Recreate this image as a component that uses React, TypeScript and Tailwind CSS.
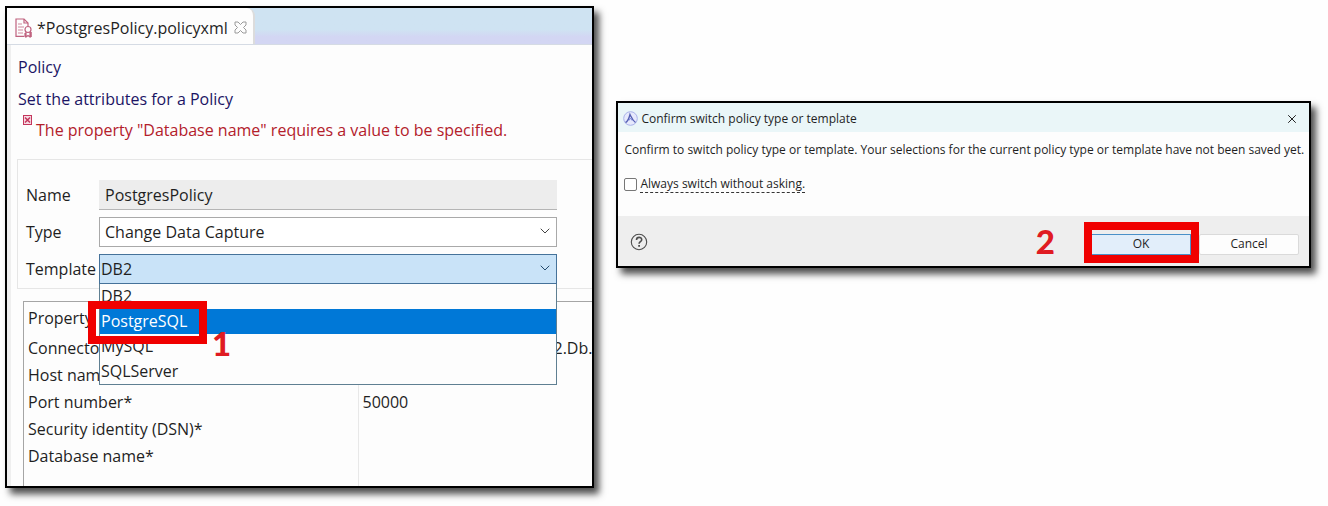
import { useState } from 'react';
import { ChevronDown, X } from 'lucide-react';

const templates = ['DB2', 'PostgreSQL', 'MySQL', 'SQLServer'];

const properties = [
  { name: 'Connector', value: '2.Db.', end: true },
  { name: 'Host name', value: '' },
  { name: 'Port number*', value: '50000' },
  { name: 'Security identity (DSN)*', value: '' },
  { name: 'Database name*', value: '' },
];

function PolicyFileIcon() {
  return (
    <svg width="18" height="20" viewBox="0 0 18 20" fill="none" stroke="#c0627f" strokeWidth="1.2">
      <path d="M9 18.4H1V1h8l4 4v3" />
      <path d="M9 1v4h4" />
      <path d="M3 6h4M3 9h6M3 12h5M3 15h5" stroke="#cf8a9e" />
      <circle cx="13" cy="11.5" r="3" />
      <path d="M11 14v5l2-1.5 2 1.5v-5M10 15v4M16.2 14v5" />
    </svg>
  );
}

function TabCloseIcon() {
  return (
    <svg width="13" height="13" viewBox="0 0 13 13" fill="none" stroke="#9a9a9a" strokeWidth="1">
      <path d="M1 1h3l2.5 2.5L9 1h3v3L9.5 6.5 12 9v3H9L6.5 9.5 4 12H1V9l2.5-2.5L1 4z" />
    </svg>
  );
}

function ErrorIcon() {
  return (
    <svg width="9" height="10" viewBox="0 0 9 10" fill="none" stroke="#c4365c">
      <rect x="0.5" y="0.5" width="8" height="9" fill="#f6dbe3" />
      <path d="M2 2.5l5 5M7 2.5l-5 5" strokeWidth="1.5" />
    </svg>
  );
}

function AppIcon() {
  return (
    <svg width="15" height="15" viewBox="0 0 15 15" fill="none">
      <circle cx="7.5" cy="7.5" r="6.8" fill="#e6e9fc" stroke="#a9b2ea" />
      <path d="M2.5 11.5c2.5-1 3.5-4 4.5-8 1.5 3 2.5 6 5.5 8" stroke="#5661b4" strokeWidth="1.4" />
      <path d="M6 9.5l1.5-2.5 1.5 2.5" stroke="#7f8adb" />
    </svg>
  );
}

function HelpIcon() {
  return (
    <svg width="18" height="18" viewBox="0 0 18 18" fill="none" stroke="#4d4d4d">
      <circle cx="9" cy="9" r="7.7" strokeWidth="1.1" />
      <path d="M6.5 7c0-3.5 5.2-3.3 5.2-.3 0 2-2.6 2-2.6 4" strokeWidth="1.6" />
      <path d="M9.1 12v1.8" strokeWidth="1.8" />
    </svg>
  );
}

function PolicyEditor() {
  const [template, setTemplate] = useState('DB2');

  return (
    <section className="border-2 border-black bg-[#fdfdfd] shadow-[5px_6px_7px_rgba(0,0,0,0.7)]">
      <div className="relative overflow-hidden">
        <div className="flex h-[37px] border-b border-[#d5dbe4] bg-linear-to-b from-[#cfe3f2] from-60% to-[#d3d6f3] to-80%">
          <div className="flex items-center gap-1 rounded-tr-lg border-r-2 border-[#dcdcdc] bg-[#fdfdfd] pl-2 pr-1 pt-1">
            <PolicyFileIcon />
            <span>*PostgresPolicy.policyxml</span>
            <button type="button" aria-label="Close tab" className="p-0.5 pb-1"><TabCloseIcon /></button>
          </div>
        </div>

        <div className="border-l-4 border-[#efefef] pl-1.5">
          <header className="pl-px pt-3 text-[#1b1464]">
            <h1 className="leading-5">Policy</h1>
            <h2 className="mt-3 leading-5">Set the attributes for a Policy</h2>
            <p className="mt-1.5 flex gap-1 pl-[5px] text-[#b3202b]">
              <ErrorIcon />
              <span className="pt-[5px] leading-5">The property "Database name" requires a value to be specified.</span>
            </p>
          </header>

          <form className="mt-[19px] flex flex-col gap-[7px] border border-r-0 border-[#e6e6e6] pb-1 pl-2 pr-[35px] pt-5">
            <div className="flex h-[30px] items-center">
              <label htmlFor="name" className="w-[73px] shrink-0">Name</label>
              <input id="name" readOnly value="PostgresPolicy" className="h-full min-w-0 flex-1 border-b border-[#b5b5b5] bg-[#ededed] px-1.5 outline-none" />
            </div>
            <div className="flex h-[30px] items-center">
              <label htmlFor="type" className="w-[73px] shrink-0">Type</label>
              <div className="relative h-full min-w-0 flex-1">
                <select id="type" className="h-full w-full appearance-none border border-[#a9a9a9] bg-white px-[5px] outline-none">
                  <option>Change Data Capture</option>
                </select>
                <ChevronDown size={16} strokeWidth={1.5} className="pointer-events-none absolute right-1 top-1.5 text-[#444]" />
              </div>
            </div>
            <div className="flex h-[30px] items-center">
              <label htmlFor="template" className="w-[73px] shrink-0">Template</label>
              <div className="relative h-full min-w-0 flex-1">
                <select
                  id="template"
                  value={template}
                  onChange={e => setTemplate(e.target.value)}
                  className="h-full w-full appearance-none border border-[#45729a] bg-[#c9e3f8] px-px outline-none"
                >
                  {templates.map(t => <option key={t}>{t}</option>)}
                </select>
                <ChevronDown size={16} strokeWidth={1.5} className="pointer-events-none absolute right-1 top-1.5 text-[#234a6d]" />

                <ul role="listbox" aria-label="Template" className="absolute inset-x-0 top-full z-10 border border-t-0 border-[#5f7f92] bg-[#fdfdfd]">
                  {templates.map(t => (
                    <li
                      key={t}
                      role="option"
                      aria-selected={t === 'PostgreSQL'}
                      onClick={() => setTemplate(t)}
                      className={`h-[25px] px-px leading-[25px] ${t === 'PostgreSQL' ? 'relative z-10 bg-[#0078d7] text-white' : ''}`}
                    >
                      {t}
                      {t === 'PostgreSQL' && (
                        <>
                          <span className="absolute -left-3 -top-2 h-[43px] w-[119px] border-8 border-[#f00000]" />
                          <span className="absolute left-28 top-3.5 font-[Lato,sans-serif] text-[33px] font-black leading-10 text-[#e01b22]">1</span>
                        </>
                      )}
                    </li>
                  ))}
                </ul>
              </div>
            </div>
          </form>

          <div className="ml-1.5 mt-3 border-l border-t border-[#a5a5a5]">
            <table className="w-full table-fixed border-collapse text-left">
              <thead>
                <tr className="h-8">
                  <th className="w-[334px] pl-1 font-normal">Property</th>
                  <th />
                </tr>
              </thead>
              <tbody>
                {properties.map(p => (
                  <tr key={p.name} className="h-[27px]">
                    <td className="border-r border-[#e8e8e8] pl-1">{p.name}</td>
                    <td className={p.end ? 'text-right' : 'pl-1'}>{p.value}</td>
                  </tr>
                ))}
                <tr className="h-[17px]">
                  <td className="border-r border-[#e8e8e8]" />
                  <td />
                </tr>
              </tbody>
            </table>
          </div>
        </div>
      </div>
    </section>
  );
}

function ConfirmDialog() {
  const [always, setAlways] = useState(false);

  return (
    <section role="dialog" aria-labelledby="dialog-title" className="mt-[95px] border-2 border-black bg-[#fdfdfd] text-xs shadow-[5px_6px_7px_rgba(0,0,0,0.7)]">
      <div className="flex h-[29px] items-center gap-[3px] bg-[#eaf6f8] pl-[5px] pr-2.5 pt-0.5">
        <AppIcon />
        <h2 id="dialog-title" className="flex-1">Confirm switch policy type or template</h2>
        <button type="button" aria-label="Close"><X size={14} strokeWidth={1.7} /></button>
      </div>
      <div className="h-[84px] pl-1.5 pt-2">
        <p className="whitespace-nowrap leading-5">Confirm to switch policy type or template. Your selections for the current policy type or template have not been saved yet.</p>
        <div className="mt-4 flex items-center gap-[3px]">
          <input
            id="always"
            type="checkbox"
            checked={always}
            onChange={e => setAlways(e.target.checked)}
            className="size-[13px] appearance-none rounded-xs border border-[#777] bg-white checked:bg-[#0078d7]"
          />
          <label htmlFor="always" className="border-b border-dashed border-[#333] leading-4">Always switch without asking.</label>
        </div>
      </div>
      <div className="flex h-[50px] items-center bg-[#eeeeee] pl-3 pr-2.5">
        <button type="button" aria-label="Help" className="pt-0.5"><HelpIcon /></button>
        <span className="ml-auto mr-9 font-[Lato,sans-serif] text-[33px] font-black leading-10 text-[#e01b22]">2</span>
        <div className="flex gap-2 pt-1.5">
          <div className="relative">
            <button type="button" className="h-[21px] w-[100px] border border-[#4a90c8] bg-[#e2eefa]">OK</button>
            <span className="pointer-events-none absolute -bottom-2 -left-[7px] -right-2 -top-3 border-8 border-[#f00000]" />
          </div>
          <button type="button" className="h-[21px] w-[100px] rounded-xs border border-[#dadada] bg-[#fdfdfd]">Cancel</button>
        </div>
      </div>
    </section>
  );
}

export default function App() {
  return (
    <main className="grid min-h-screen grid-cols-[589fr_694fr] items-start gap-x-[22px] bg-[#fefefe] pb-4 pl-[5px] pr-[17px] pt-1.5 font-['Open_Sans','Noto_Sans',sans-serif] text-base text-[#1f1f1f]">
      <PolicyEditor />
      <ConfirmDialog />
    </main>
  );
}
